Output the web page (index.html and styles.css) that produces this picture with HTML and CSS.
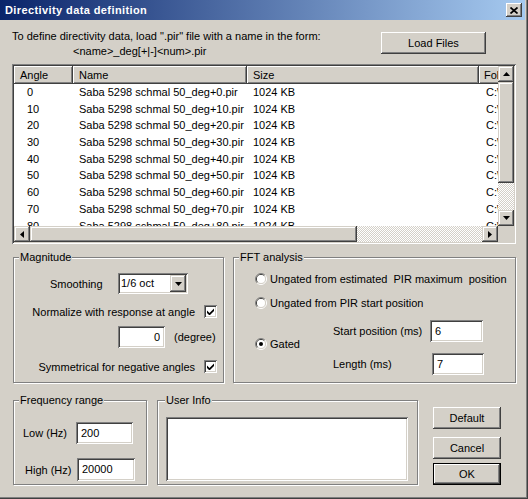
FILE: index.html
```html
<!DOCTYPE html>
<html lang="en">
<head>
    <meta charset="utf-8" />
    <title>Directivity data definition</title>
    <link rel="stylesheet" href="styles.css">
</head>
<body>
<div class="window">
    <div class="titlebar">
        <span class="title">Directivity data definition</span>
        <span class="close">
            <svg width="8" height="7" viewBox="0 0 8 7"><path d="M0.5 0.5 L7.5 6.5 M7.5 0.5 L0.5 6.5" stroke="#000" stroke-width="1.7" fill="none"/></svg>
        </span>
    </div>
    <div class="client">
        <div class="intro">
            <div class="intro-text">
                <div>To define directivity data, load ".pir" file with a name in the form:</div>
                <div class="pattern">&lt;name&gt;_deg[+|-]&lt;num&gt;.pir</div>
            </div>
            <button class="btn load">Load Files</button>
        </div>

        <div class="list">
            <div class="view">
                <div class="head">
                    <span class="hc c-angle">Angle</span>
                    <span class="hc c-name">Name</span>
                    <span class="hc c-size">Size</span>
                    <span class="hc c-fo">Folder</span>
                </div>
                <div class="row"><span class="c-angle">0</span><span class="c-name">Saba 5298 schmal 50_deg+0.pir</span><span class="c-size">1024 KB</span><span class="c-fo">C:\Messungen</span></div>
                <div class="row"><span class="c-angle">10</span><span class="c-name">Saba 5298 schmal 50_deg+10.pir</span><span class="c-size">1024 KB</span><span class="c-fo">C:\Messungen</span></div>
                <div class="row"><span class="c-angle">20</span><span class="c-name">Saba 5298 schmal 50_deg+20.pir</span><span class="c-size">1024 KB</span><span class="c-fo">C:\Messungen</span></div>
                <div class="row"><span class="c-angle">30</span><span class="c-name">Saba 5298 schmal 50_deg+30.pir</span><span class="c-size">1024 KB</span><span class="c-fo">C:\Messungen</span></div>
                <div class="row"><span class="c-angle">40</span><span class="c-name">Saba 5298 schmal 50_deg+40.pir</span><span class="c-size">1024 KB</span><span class="c-fo">C:\Messungen</span></div>
                <div class="row"><span class="c-angle">50</span><span class="c-name">Saba 5298 schmal 50_deg+50.pir</span><span class="c-size">1024 KB</span><span class="c-fo">C:\Messungen</span></div>
                <div class="row"><span class="c-angle">60</span><span class="c-name">Saba 5298 schmal 50_deg+60.pir</span><span class="c-size">1024 KB</span><span class="c-fo">C:\Messungen</span></div>
                <div class="row"><span class="c-angle">70</span><span class="c-name">Saba 5298 schmal 50_deg+70.pir</span><span class="c-size">1024 KB</span><span class="c-fo">C:\Messungen</span></div>
                <div class="row"><span class="c-angle">80</span><span class="c-name">Saba 5298 schmal 50_deg+80.pir</span><span class="c-size">1024 KB</span><span class="c-fo">C:\Messungen</span></div>
            </div>
            <div class="vscroll">
                <span class="sb-btn"><svg width="7" height="4" viewBox="0 0 7 4"><polygon points="3.5,0 7,4 0,4" fill="#000"/></svg></span>
                <span class="sb-thumb v-thumb"></span>
                <span class="sb-track"></span>
                <span class="sb-btn"><svg width="7" height="4" viewBox="0 0 7 4"><polygon points="0,0 7,0 3.5,4" fill="#000"/></svg></span>
            </div>
            <div class="hscroll">
                <span class="sb-btn"><svg width="4" height="7" viewBox="0 0 4 7"><polygon points="0,3.5 4,0 4,7" fill="#000"/></svg></span>
                <span class="sb-thumb h-thumb"></span>
                <span class="sb-track"></span>
                <span class="sb-btn"><svg width="4" height="7" viewBox="0 0 4 7"><polygon points="0,0 4,3.5 0,7" fill="#000"/></svg></span>
            </div>
            <div class="corner"></div>
        </div>

        <div class="groups">
            <fieldset class="group magnitude">
                <legend>Magnitude</legend>
                <div class="smooth">
                    <span class="lbl-smooth">Smoothing</span>
                    <div class="combo">
                        <span class="combo-text">1/6 oct</span>
                        <span class="combo-btn"><svg width="7" height="4" viewBox="0 0 7 4"><polygon points="0,0 7,0 3.5,4" fill="#000"/></svg></span>
                    </div>
                </div>
                <div class="opt opt-norm">
                    <span>Normalize with response at angle</span>
                    <span class="check"><svg width="7" height="7" viewBox="0 0 7 7"><polygon points="0,2.5 2.5,5 7,0.5 7,3 2.5,7.5 0,5" fill="#000"/></svg></span>
                </div>
                <div class="degree">
                    <input class="edit deg-edit" value="0">
                    <span class="deg-unit">(degree)</span>
                </div>
                <div class="opt opt-sym">
                    <span>Symmetrical for negative angles</span>
                    <span class="check"><svg width="7" height="7" viewBox="0 0 7 7"><polygon points="0,2.5 2.5,5 7,0.5 7,3 2.5,7.5 0,5" fill="#000"/></svg></span>
                </div>
            </fieldset>

            <fieldset class="group fft">
                <legend>FFT analysis</legend>
                <div class="radio-row r-first">
                    <svg class="radio" width="12" height="12" viewBox="0 0 12 12">
                        <path d="M2.1 9.9 A5.5 5.5 0 0 1 9.9 2.1" stroke="#808080" fill="none"/>
                        <path d="M9.9 2.1 A5.5 5.5 0 0 1 2.1 9.9" stroke="#fff" fill="none"/>
                        <path d="M2.8 9.2 A4.5 4.5 0 0 1 9.2 2.8" stroke="#404040" fill="none"/>
                        <path d="M9.2 2.8 A4.5 4.5 0 0 1 2.8 9.2" stroke="#d4d0c8" fill="none"/>
                        <circle cx="6" cy="6" r="4" fill="#fff"/>
                    </svg>
                    <span>Ungated from estimated&nbsp; PIR maximum&nbsp; position</span>
                </div>
                <div class="radio-row r-second">
                    <svg class="radio" width="12" height="12" viewBox="0 0 12 12">
                        <path d="M2.1 9.9 A5.5 5.5 0 0 1 9.9 2.1" stroke="#808080" fill="none"/>
                        <path d="M9.9 2.1 A5.5 5.5 0 0 1 2.1 9.9" stroke="#fff" fill="none"/>
                        <path d="M2.8 9.2 A4.5 4.5 0 0 1 9.2 2.8" stroke="#404040" fill="none"/>
                        <path d="M9.2 2.8 A4.5 4.5 0 0 1 2.8 9.2" stroke="#d4d0c8" fill="none"/>
                        <circle cx="6" cy="6" r="4" fill="#fff"/>
                    </svg>
                    <span>Ungated from PIR start position</span>
                </div>
                <div class="gated">
                    <div class="radio-row r-gated">
                        <svg class="radio" width="12" height="12" viewBox="0 0 12 12">
                            <path d="M2.1 9.9 A5.5 5.5 0 0 1 9.9 2.1" stroke="#808080" fill="none"/>
                            <path d="M9.9 2.1 A5.5 5.5 0 0 1 2.1 9.9" stroke="#fff" fill="none"/>
                            <path d="M2.8 9.2 A4.5 4.5 0 0 1 9.2 2.8" stroke="#404040" fill="none"/>
                            <path d="M9.2 2.8 A4.5 4.5 0 0 1 2.8 9.2" stroke="#d4d0c8" fill="none"/>
                            <circle cx="6" cy="6" r="4" fill="#fff"/>
                            <circle cx="6" cy="6" r="2" fill="#000"/>
                        </svg>
                        <span>Gated</span>
                    </div>
                    <div class="gated-fields">
                        <div class="field-row">
                            <span class="lbl-start">Start position (ms)</span>
                            <input class="edit start-edit" value="6">
                        </div>
                        <div class="field-row row-length">
                            <span class="lbl-length">Length (ms)</span>
                            <input class="edit length-edit" value="7">
                        </div>
                    </div>
                </div>
            </fieldset>
        </div>

        <div class="bottom">
            <fieldset class="group freq">
                <legend>Frequency range</legend>
                <div class="freq-row low">
                    <span class="lbl-low">Low (Hz)</span>
                    <input class="edit low-edit" value="200">
                </div>
                <div class="freq-row high">
                    <span class="lbl-high">High (Hz)</span>
                    <input class="edit high-edit" value="20000">
                </div>
            </fieldset>
            <fieldset class="group info">
                <legend>User Info</legend>
                <textarea class="memo"></textarea>
            </fieldset>
            <div class="buttons">
                <button class="btn b-default">Default</button>
                <button class="btn b-cancel">Cancel</button>
                <button class="btn b-ok">OK</button>
            </div>
        </div>
    </div>
</div>
</body>
</html>
```

FILE: styles.css
```css
* {
    box-sizing: border-box;
}
body {
    margin: 0;
    font-family: "Liberation Sans", Arial, sans-serif;
    font-size: 11px;
    color: #000;
}
.window {
    width: 528px;
    height: 499px;
    padding: 0 3px 3px 0;
    background: #d4d0c8;
    box-shadow: inset -1px -1px #404040, inset -2px -2px #808080;
    display: flex;
    flex-direction: column;
}

/* title bar */
.titlebar {
    height: 20px;
    flex-shrink: 0;
    display: flex;
    align-items: center;
    padding: 0 3px 0 5px;
    background: linear-gradient(to right, #0a246a, #a6caf0);
}
.title {
    color: #fff;
    font-weight: bold;
    letter-spacing: 0.4px;
}
.close {
    margin-left: auto;
    width: 16px;
    height: 14px;
    display: flex;
    align-items: center;
    justify-content: center;
    background: #d4d0c8;
    box-shadow: inset -1px -1px #404040, inset 1px 1px #fff, inset -2px -2px #808080;
}

/* common 3d pieces */
.btn {
    font: inherit;
    color: #000;
    border: 0;
    padding: 0;
    background: #d4d0c8;
    box-shadow: inset -1px -1px #404040, inset 1px 1px #fff, inset -2px -2px #808080, inset 2px 2px #d4d0c8;
}
.edit {
    font: inherit;
    color: #000;
    border: 0;
    outline: none;
    background: #fff;
    height: 22px;
    padding: 0 0 1px 5px;
    box-shadow: inset 1px 1px #808080, inset -1px -1px #fff, inset 2px 2px #404040, inset -2px -2px #d4d0c8;
}
.group {
    margin: 0;
    padding: 0;
    min-width: 0;
    border: 1px solid #808080;
    box-shadow: inset 1px 1px #fff, 1px 1px #fff;
}
.group > legend {
    padding: 0 1px;
    margin-left: 5px;
    height: 14px;
    line-height: 14px;
    background: #d4d0c8;
}

/* intro */
.intro {
    display: flex;
    margin-top: 9px;
    padding: 0 39px 0 12px;
    line-height: 15px;
}
.pattern {
    padding-left: 61px;
}
.load {
    margin-left: auto;
    margin-top: 3px;
    width: 105px;
    height: 22px;
}

/* list view */
.list {
    margin: 5px 0 0 12px;
    width: 504px;
    height: 180px;
    flex-shrink: 0;
    padding: 2px;
    background: #fff;
    display: grid;
    grid-template-columns: 1fr 16px;
    grid-template-rows: 1fr 16px;
    box-shadow: inset 1px 1px #808080, inset -1px -1px #fff, inset 2px 2px #404040, inset -2px -2px #d4d0c8;
}
.view {
    overflow: hidden;
    white-space: nowrap;
}
.head, .row {
    display: flex;
}
.head {
    height: 18px;
}
.head > span, .row > span {
    flex-shrink: 0;
    overflow: hidden;
}
.hc {
    line-height: 18px;
    padding-left: 6px;
    background: #d4d0c8;
    box-shadow: inset -1px -1px #404040, inset 1px 1px #fff, inset -2px -2px #808080;
}
.row {
    height: 16.7px;
    line-height: 16.7px;
}
.c-angle { width: 59px; }
.c-name { width: 174px; }
.c-size { width: 232px; }
.c-fo { width: 100px; }
.row .c-angle { padding-left: 13px; }
.row .c-name { padding-left: 6px; }
.row .c-size { padding-left: 6px; }
.row .c-fo { padding-left: 7px; }
.head .c-fo { padding-left: 5px; }

.vscroll, .hscroll {
    display: flex;
    background: #d4d0c8;
}
.vscroll {
    flex-direction: column;
}
.sb-btn {
    width: 16px;
    height: 16px;
    flex-shrink: 0;
    display: flex;
    align-items: center;
    justify-content: center;
    background: #d4d0c8;
    box-shadow: inset -1px -1px #404040, inset 1px 1px #d4d0c8, inset -2px -2px #808080, inset 2px 2px #fff;
}
.sb-thumb {
    flex-shrink: 0;
    background: #d4d0c8;
    box-shadow: inset -1px -1px #404040, inset 1px 1px #d4d0c8, inset -2px -2px #808080, inset 2px 2px #fff;
}
.v-thumb { height: 101px; }
.h-thumb { width: 327px; }
.sb-track {
    flex: 1;
    background-image: repeating-conic-gradient(#fff 0 25%, #d4d0c8 0 50%);
    background-size: 2px 2px;
}
.corner {
    background: #d4d0c8;
}

/* group boxes */
.groups {
    display: flex;
    margin-top: 6px;
    height: 133px;
    flex-shrink: 0;
}
.magnitude {
    margin-left: 13px;
    width: 211px;
}
.fft {
    margin-left: 9px;
    width: 283px;
}
.smooth {
    display: flex;
    align-items: center;
    margin-top: 9px;
    padding-left: 36px;
}
.lbl-smooth {
    width: 68px;
}
.combo {
    width: 70px;
    height: 21px;
    padding: 2px;
    display: flex;
    background: #fff;
    box-shadow: inset 1px 1px #808080, inset -1px -1px #fff, inset 2px 2px #404040, inset -2px -2px #d4d0c8;
}
.combo-text {
    flex: 1;
    line-height: 17px;
    padding-left: 1px;
}
.combo-btn {
    width: 16px;
    height: 17px;
    display: flex;
    align-items: center;
    justify-content: center;
    background: #d4d0c8;
    box-shadow: inset -1px -1px #404040, inset 1px 1px #d4d0c8, inset -2px -2px #808080, inset 2px 2px #fff;
}
.opt {
    display: flex;
    align-items: center;
    justify-content: flex-end;
    gap: 9px;
    height: 13px;
    padding-right: 6px;
}
.opt-norm { margin-top: 11px; }
.opt-sym { margin-top: 12px; }
.check {
    width: 13px;
    height: 13px;
    display: flex;
    align-items: center;
    justify-content: center;
    background: #fff;
    box-shadow: inset 1px 1px #808080, inset -1px -1px #fff, inset 2px 2px #404040, inset -2px -2px #d4d0c8;
}
.degree {
    display: flex;
    align-items: center;
    margin-top: 8px;
    padding-left: 104px;
}
.deg-edit {
    width: 47px;
    text-align: right;
    padding: 0 5px 1px 0;
}
.deg-unit {
    margin-left: 9px;
}

.radio-row {
    display: flex;
    align-items: center;
    gap: 3px;
    height: 16px;
    padding-left: 21px;
}
.r-first { margin-top: 7px; }
.r-second { margin-top: 8px; }
.gated {
    display: flex;
    margin-top: 9px;
}
.r-gated {
    width: 99px;
    margin-top: 16px;
}
.field-row {
    display: flex;
    align-items: center;
}
.row-length {
    margin-top: 11px;
}
.lbl-start { width: 97px; }
.lbl-length { width: 99px; }
.start-edit { width: 53px; }
.length-edit { width: 52px; }

/* bottom row */
.bottom {
    display: flex;
    margin-top: 10px;
    height: 92px;
    flex-shrink: 0;
}
.freq {
    margin-left: 13px;
    width: 134px;
}
.freq-row {
    display: flex;
    align-items: center;
}
.low {
    margin-top: 15px;
    padding-left: 9px;
}
.high {
    margin-top: 14px;
    padding-left: 11px;
}
.lbl-low { width: 53px; }
.lbl-high { width: 52px; }
.low-edit { width: 57px; }
.high-edit { width: 58px; height: 23px; }
.info {
    margin-left: 10px;
    width: 261px;
}
.info > legend {
    margin-left: 7px;
}
.memo {
    display: block;
    width: 242px;
    height: 64px;
    margin: 10px 0 0 8px;
    border: 0;
    outline: none;
    resize: none;
    background: #fff;
    box-shadow: inset 1px 1px #808080, inset -1px -1px #fff, inset 2px 2px #404040, inset -2px -2px #d4d0c8;
}
.buttons {
    margin-left: 15px;
    width: 68px;
    display: flex;
    flex-direction: column;
}
.buttons .btn {
    height: 22px;
}
.b-default { margin-top: 14px; }
.b-cancel { margin-top: 8px; }
.b-ok {
    margin-top: 4px;
    box-shadow: inset 0 0 0 1px #000, inset -2px -2px #404040, inset 2px 2px #fff, inset -3px -3px #808080;
}
```
